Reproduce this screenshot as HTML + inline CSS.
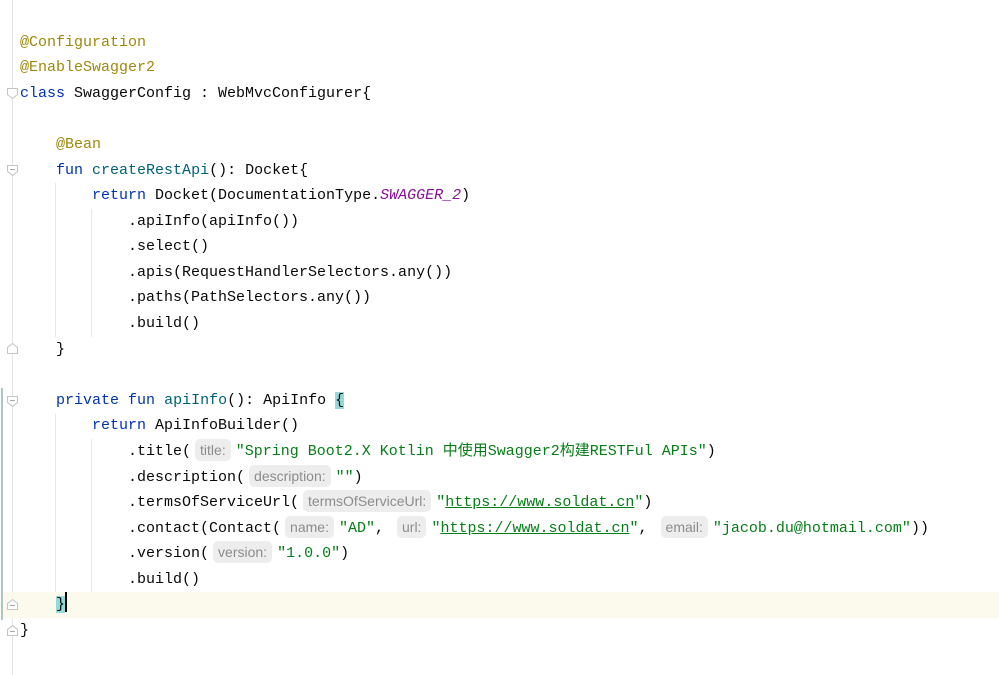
<!DOCTYPE html>
<html><head><meta charset="utf-8"><style>
html,body{margin:0;padding:0;background:#fff;width:999px;height:675px;overflow:hidden;position:relative}
.l{position:absolute;left:20px;height:25.6px;line-height:25.6px;font-family:"Liberation Mono","Noto Sans CJK SC",monospace;font-size:15px;color:#080808;white-space:pre}
.a{color:#9e880d}.k{color:#0033b3}.f{color:#00627a}.s{color:#067d17}.p{color:#871094;font-style:italic}
.u{text-decoration:underline}
.h{display:inline-block;font-family:"Liberation Sans",sans-serif;font-size:14px;color:#8c8c8c;background:#ededed;border-radius:5px;padding:0 5px;line-height:22px;height:22px;margin:0 5px 0 4px;vertical-align:0px}
.g{position:absolute;width:1px;background:#e6e6e6}
.fold{position:absolute;left:7px;width:11px;height:11px}
</style></head><body>
<div style="position:absolute;left:12px;top:0;width:1px;height:675px;background:#e3e3e3"></div>
<div style="position:absolute;left:0;top:592px;width:999px;height:26px;background:#fcfaed"></div>
<div style="position:absolute;left:1px;top:388px;width:2px;height:232px;background:#a9c6c9"></div>
<div class="g" style="left:55px;top:183px;height:154px"></div>
<div class="g" style="left:91px;top:209px;height:128px"></div>
<div class="g" style="left:55px;top:414px;height:178px"></div>
<div class="g" style="left:91px;top:439px;height:153px"></div>
<svg class="fold" style="top:88px" viewBox="0 0 11 11"><path d="M0.5 0.5H10.5V6.5L5.5 10.5L0.5 6.5Z" fill="#fff" stroke="#c4c4c4"/></svg>
<svg class="fold" style="top:165px" viewBox="0 0 11 11"><path d="M0.5 0.5H10.5V6.5L5.5 10.5L0.5 6.5Z" fill="#fff" stroke="#c4c4c4"/><path d="M3 4.5H8" stroke="#aaa"/></svg>
<svg class="fold" style="top:343px" viewBox="0 0 11 11"><path d="M0.5 10.5H10.5V4.5L5.5 0.5L0.5 4.5Z" fill="#fff" stroke="#c4c4c4"/></svg>
<svg class="fold" style="top:396px" viewBox="0 0 11 11"><path d="M0.5 0.5H10.5V6.5L5.5 10.5L0.5 6.5Z" fill="#fff" stroke="#c4c4c4"/><path d="M3 4.5H8" stroke="#aaa"/></svg>
<svg class="fold" style="top:599px" viewBox="0 0 11 11"><path d="M0.5 10.5H10.5V4.5L5.5 0.5L0.5 4.5Z" fill="#fff" stroke="#c4c4c4"/><path d="M3 6.5H8" stroke="#aaa"/></svg>
<svg class="fold" style="top:625px" viewBox="0 0 11 11"><path d="M0.5 10.5H10.5V4.5L5.5 0.5L0.5 4.5Z" fill="#fff" stroke="#c4c4c4"/><path d="M3 6.5H8" stroke="#aaa"/></svg>

<div class="l" style="top:30px"><span class="a">@Configuration</span></div>
<div class="l" style="top:55px"><span class="a">@EnableSwagger2</span></div>
<div class="l" style="top:81px"><span class="k">class</span> SwaggerConfig : WebMvcConfigurer{</div>
<div class="l" style="top:132px">    <span class="a">@Bean</span></div>
<div class="l" style="top:158px">    <span class="k">fun</span> <span class="f">createRestApi</span>(): Docket{</div>
<div class="l" style="top:183px">        <span class="k">return</span> Docket(DocumentationType.<span class="p">SWAGGER_2</span>)</div>
<div class="l" style="top:209px">            .apiInfo(apiInfo())</div>
<div class="l" style="top:234px">            .select()</div>
<div class="l" style="top:260px">            .apis(RequestHandlerSelectors.any())</div>
<div class="l" style="top:285px">            .paths(PathSelectors.any())</div>
<div class="l" style="top:311px">            .build()</div>
<div class="l" style="top:337px">    }</div>
<div class="l" style="top:388px">    <span class="k">private fun</span> <span class="f">apiInfo</span>(): ApiInfo <span style="background:#93d9d9">{</span></div>
<div class="l" style="top:413px">        <span class="k">return</span> ApiInfoBuilder()</div>
<div class="l" style="top:439px">            .title(<span class="h">title:</span><span class="s">"Spring Boot2.X Kotlin 中使用Swagger2构建RESTFul APIs"</span>)</div>
<div class="l" style="top:465px">            .description(<span class="h">description:</span><span class="s">""</span>)</div>
<div class="l" style="top:490px">            .termsOfServiceUrl(<span class="h">termsOfServiceUrl:</span><span class="s">"<span class="u">https://www.soldat.cn</span>"</span>)</div>
<div class="l" style="top:516px">            .contact(Contact(<span class="h">name:</span><span class="s">"AD"</span>, <span class="h">url:</span><span class="s">"<span class="u">https://www.soldat.cn</span>"</span>, <span class="h">email:</span><span class="s">"jacob.du@hotmail.com"</span>))</div>
<div class="l" style="top:541px">            .version(<span class="h">version:</span><span class="s">"1.0.0"</span>)</div>
<div class="l" style="top:567px">            .build()</div>
<div class="l" style="top:592px">    <span style="background:#93d9d9">}</span><span style="display:inline-block;width:2px;height:20px;background:#000;vertical-align:-4px"></span></div>
<div class="l" style="top:618px">}</div>
</body></html>
